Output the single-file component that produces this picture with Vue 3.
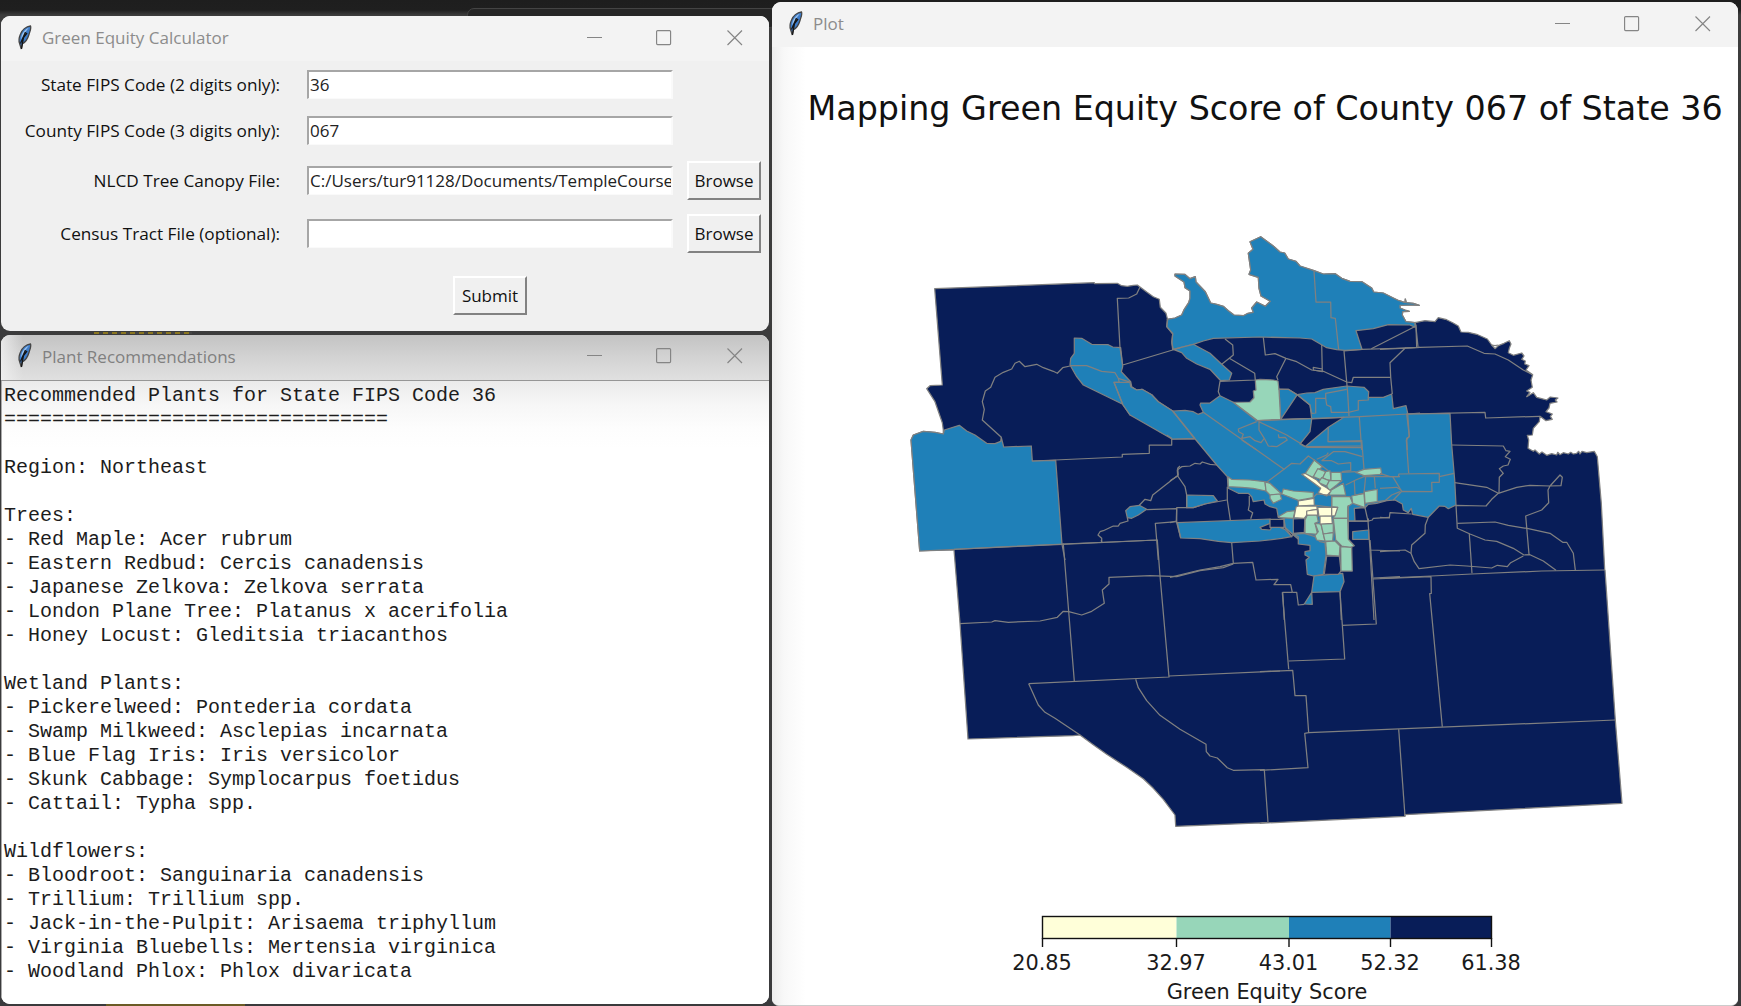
<script setup>
import { h } from 'vue'

const NAVY = '#081d58'
const BLUE = '#1f80b8'
const MINT = '#97d6b9'
const CREAM = '#ffffd9'

const plants = `Recommended Plants for State FIPS Code 36
================================

Region: Northeast

Trees:
- Red Maple: Acer rubrum
- Eastern Redbud: Cercis canadensis
- Japanese Zelkova: Zelkova serrata
- London Plane Tree: Platanus x acerifolia
- Honey Locust: Gleditsia triacanthos

Wetland Plants:
- Pickerelweed: Pontederia cordata
- Swamp Milkweed: Asclepias incarnata
- Blue Flag Iris: Iris versicolor
- Skunk Cabbage: Symplocarpus foetidus
- Cattail: Typha spp.

Wildflowers:
- Bloodroot: Sanguinaria canadensis
- Trillium: Trillium spp.
- Jack-in-the-Pulpit: Arisaema triphyllum
- Virginia Bluebells: Mertensia virginica
- Woodland Phlox: Phlox divaricata`

const fields = [
  { label: 'State FIPS Code (2 digits only):', value: '36' },
  { label: 'County FIPS Code (3 digits only):', value: '067' },
  { label: 'NLCD Tree Canopy File:', value: 'C:/Users/tur91128/Documents/TempleCourse', browse: true },
  { label: 'Census Tract File (optional):', value: '', browse: true },
]

// Map sheets: each has its own origin, points are stored in thirds of a pixel.
const sheets = { nw: [900, 220], n: [1160, 220], e: [1380, 280], c: [1170, 440], sw: [930, 540], se: [1260, 540] }
const at = (s, list) =>
  list.trim().split(/\s+/).map((p) => {
    const [x, y] = p.split(',').map(Number)
    return `${(sheets[s][0] + x / 3).toFixed(1)},${(sheets[s][1] + y / 3).toFixed(1)}`
  }).join(' ')

const lake = '22,298 45,294 65,285 73,268 86,248 90,235 90,213 75,203 72,186 45,168 45,162 74,163 90,176 106,170 108,186 136,215 152,249 170,253 190,259 205,272 222,285 250,287 264,280 280,277 275,264 290,246 316,259 331,244 303,228 297,205 295,172 267,163 272,150 265,100 279,88 270,65 302,50 340,78 360,96 374,99 385,117 408,124 420,138 462,152 490,162 526,161 545,175 570,184 606,185 635,204 641,216 670,219 700,234 717,242'
const inlet = '58,62 75,68 76,57 79,68 100,70 118,76 95,75 60,76 60,84 75,90 88,94 68,95 67,105 78,125 105,128'

const outline = [
  at('nw', '104,206 583,188 584,191 652,190 665,197 682,199 700,196 712,195 720,201 740,216 760,230 778,238 781,262 798,280 803,300'),
  at('n', lake),
  at('e', inlet),
  at('e', '135,122 165,125 175,113 200,119 218,128 235,138 243,156 265,157 290,163 322,177 335,195 345,206 355,197 372,190 388,182 393,192 388,205 385,218 400,226 425,219 432,228 425,238 436,243 434,252 447,257 438,270 458,284 453,300 457,322 440,333 450,337 440,350 460,338 470,352 485,356 500,360 511,351 534,354 526,360 531,366 510,370 507,384 498,395 517,402 511,409 517,418 498,422 480,409 478,425 460,445 457,465 442,466 446,480 444,505 460,514 465,510 478,522 486,516 500,526 515,521 530,525 533,517 540,524 550,518 565,522 572,517 580,522 590,520 596,514 600,522 606,514 620,518 643,514 652,530 664,670 674,870'),
  at('se', '1035,90 1066,540 1086,790 435,824 435,829 0,850'),
  at('sw', '1010,848 737,859 735,825 700,778 670,745 640,716 590,682 530,643 490,614 450,585 430,587 114,597 90,250 72,30'),
  at('nw', '59,993 33,660 40,645 70,634 105,637 130,642 130,630 127,608 105,545 80,506 90,497 127,495'),
].join(' ')

const west = at('nw', '33,660 40,645 70,634 105,637 130,642 133,630 178,616 200,633 225,645 260,670 285,671 302,664 304,652 311,681 394,678 397,723 467,721 486,973 59,993')
const north = [at('n', lake), at('e', inlet), at('n', '765,322 750,315 685,314 640,326 588,332 606,388 555,391 530,389 500,383 455,357 420,354 300,351 160,355 130,363 100,373 40,388 36,370 38,340 20,320')].join(' ')
const centre = [
  at('nw', '523,354 545,355 575,373 625,374 638,381 662,383 668,440 664,455 692,485 695,500 710,510 726,508 755,524 775,545 818,573'),
  at('n', '38,573 75,571 100,575 114,583 130,577 120,555 122,549 150,549 180,527 220,547 290,602 362,598 357,508 385,508 412,524 440,519 465,518 490,508 560,498 612,502 626,515 625,532 670,532 695,522 700,566 738,557 743,580'),
  at('e', '80,402 210,400 215,495 224,600 228,675 205,686 194,679 178,678 145,712 98,703 94,685 85,698 70,690 67,672 45,660 20,662'),
  at('c', '620,190 595,193 585,203 560,205 555,243 535,243 535,300 490,320 400,310 370,285 345,262 342,235 325,232 320,205 300,200 285,192 282,180 250,185 245,170 235,160 205,160 175,145 172,110 140,75 78,0'),
  at('n', '105,657 35,657 30,650 0,635'),
  at('nw', '770,607 740,600 690,585 668,553 550,495 530,470 510,435 512,415 523,400'),
].join(' ')

const areas = [
  [BLUE, west], [BLUE, north], [BLUE, centre],
  [BLUE, at('n', '40,388 65,398 80,415 110,432 150,448 182,482 208,480 215,460 185,433 150,400 100,373')],
  [BLUE, at('nw', '677,872 690,860 718,856 740,868 715,885 695,895 682,893')],
  // the corridor between the two long navy tracts
  [BLUE, at('nw', '642,487 690,487 692,500 710,510 726,508 755,524 775,545 818,573 885,655 816,657 690,585 668,553')],
  [MINT, at('n', '286,480 300,478 340,480 354,483 357,510 362,598 293,602 220,547 270,546 282,533 280,513 288,510')],
  [NAVY, at('n', '412,524 450,555 455,595 362,598')],
  [NAVY, at('n', '455,597 552,592 505,622 435,680 420,672 450,635')],
  // band south of the centre
  [BLUE, at('c', '22,248 300,237 300,250 270,262 275,268 300,270 305,262 330,262 345,268 365,290 335,295 270,303 185,308 145,304 90,296 32,294')],
  [NAVY, at('c', '300,238 342,238 342,262 320,262 300,262')],
  [BLUE, at('c', '50,165 130,167 142,183 105,192 70,203 50,203')],
  [NAVY, at('c', '553,205 585,203 594,243 555,243')],
  [BLUE, at('c', '548,275 596,270 596,298 548,298')],
  [BLUE, at('c', '370,283 403,280 435,290 450,305 465,308 468,346 460,403 430,408 412,403 408,360 418,352 405,345 405,335 420,332 420,316 385,312 385,290')],
  [BLUE, at('c', '432,408 518,400 522,425 510,455 425,457')],
  [BLUE, at('c', '403,492 425,457 427,493')],
  [NAVY, at('c', '370,237 405,235 403,277 370,280')],
  [NAVY, at('c', '470,348 508,348 513,393 505,403 463,402')],
  // inner ring
  [MINT, at('c', '174,110 185,118 240,120 285,125 288,153 250,145 215,142 175,140')],
  [MINT, at('c', '285,125 300,130 335,162 300,165 288,153')],
  [MINT, at('c', '300,165 330,162 335,178 310,190 300,175')],
  [MINT, at('c', '340,147 370,153 430,157 430,173 385,181 335,162')],
  [MINT, at('c', '433,60 457,80 440,95 430,112 405,102')],
  [MINT, at('c', '443,86 467,95 455,120 430,110')],
  [MINT, at('c', '467,95 480,92 483,120 470,120 458,113')],
  [MINT, at('c', '483,97 513,97 515,122 483,122')],
  [MINT, at('c', '455,113 478,122 470,138 445,128')],
  [MINT, at('c', '478,122 515,122 500,135 478,152 470,138')],
  [MINT, at('c', '480,152 520,130 527,165 478,165')],
  [MINT, at('c', '485,170 540,170 548,190 533,200 533,235 490,235 503,202 485,200')],
  [MINT, at('c', '545,168 582,160 585,203 548,190')],
  [MINT, at('c', '583,155 622,148 622,185 585,190')],
  [MINT, at('c', '557,97 582,88 632,84 635,103 582,107')],
  [MINT, at('c', '325,230 350,215 375,212 370,235 330,233')],
  [MINT, at('c', '405,240 412,225 440,222 445,245 435,250 443,283 405,280')],
  [MINT, at('c', '435,250 453,252 460,280 465,303 440,300 435,287 445,275')],
  [MINT, at('c', '453,252 490,250 490,278 460,282')],
  [MINT, at('c', '460,282 490,278 488,303 465,303')],
  [MINT, at('c', '490,235 533,235 535,298 553,317 540,323 515,318 497,300')],
  [MINT, at('c', '467,305 495,303 510,318 508,348 470,345')],
  [MINT, at('c', '512,320 545,322 547,393 513,393')],
  [CREAM, at('c', '395,103 405,100 440,120 455,135 470,143 483,153 470,168 445,158 452,145 430,128')],
  [CREAM, at('c', '385,183 432,175 433,195 385,198')],
  [CREAM, at('c', '378,201 385,198 440,198 442,208 420,212 410,225 403,235 372,233')],
  [CREAM, at('c', '410,213 442,208 443,225 410,225')],
  [CREAM, at('c', '443,202 485,202 485,228 447,230')],
  [CREAM, at('c', '485,202 503,202 495,227 485,228')],
  [CREAM, at('c', '450,228 485,228 487,250 450,252')],
]

const lines = [
  at('nw', '720,201 710,222 686,234 652,235 660,383 668,435 818,390 840,384'),
  at('nw', '803,300 800,320 818,342 815,365 818,390'),
  at('nw', '510,438 488,443 472,460 460,454 430,443 410,433 375,440 358,424 345,430 335,447 310,457 285,472 272,502 256,513 247,545 253,568 247,600 304,652'),
  at('nw', '510,437 560,437 605,454 645,458 655,475 692,487'),
  at('nw', '655,475 658,487 642,487 668,553'),
  at('nw', '397,723 667,711 667,703 748,700 748,675 815,675 815,655 800,645'),
  at('nw', '718,856 735,838 752,842 758,825 800,792 835,765 833,745 840,738'),
  at('nw', '740,869 830,866 830,905 766,910 770,960 486,973'),
  at('nw', '682,893 684,903 660,910 655,918 640,918 610,932 600,935 594,945 605,955 605,966'),
  at('n', '462,152 468,246 512,246 513,293 526,295 536,389'),
  at('n', '195,357 218,375 220,405 208,415 185,433'),
  at('n', '208,415 284,460 286,480 180,484 175,515 180,527'),
  at('n', '310,352 316,405 345,401 378,415 410,425 455,450 490,454 560,486 575,488 580,472 692,472'),
  at('n', '378,415 350,470 354,480'),
  at('n', '485,375 487,455 460,450 460,442 487,447'),
  at('n', '606,388 552,393 560,486 563,520 567,588'),
  at('n', '606,388 736,384 690,428 692,472 697,522'),
  at('n', '634,386 768,318 770,382 736,384'),
  at('n', '768,318 765,306'),
  at('n', '735,384 780,382'),
  at('n', '412,524 450,555 455,580 467,579 467,535 497,535 497,520 560,508'),
  at('n', '497,535 500,555 512,560 514,577 565,577 595,570 595,542 625,540 625,532'),
  at('n', '293,602 600,590 743,582 780,579'),
  at('n', '598,590 605,690'),
  at('n', '505,622 504,665 605,662'),
  at('n', '743,582 748,650 740,655 742,690'),
  at('n', '38,573 103,655'),
  at('n', '130,577 290,690'),
  at('n', '290,605 235,627 236,635 250,643 245,655 270,650 285,662 303,668 313,655 297,630 297,605 380,645 440,682 605,683'),
  at('n', '313,655 325,678 350,680 382,660 376,652 357,653 355,643'),
  at('n', '354,507 385,508 412,524'),
  at('e', '105,128 108,142 114,200'),
  at('e', '0,208 120,202 262,198 312,220 345,222 385,240 430,270 458,284'),
  at('e', '335,195 345,197 355,195'),
  at('e', '80,402 315,397 317,414 480,409'),
  at('e', '215,495 370,498 378,512 390,514 376,530 391,538 384,555 370,558 358,566 370,580 358,592 357,640'),
  at('e', '224,608 320,622 355,640 410,622 450,616 510,618 540,585 547,592 543,617 510,618 504,630 506,668 485,690 437,708 447,823'),
  at('e', '355,640 335,658 318,678 228,676 232,745 270,762 315,780 350,784 400,805 432,825 450,824 490,843 528,871'),
  at('e', '232,730 345,726 385,736 445,746 510,760 548,787 560,787 580,820 586,870'),
  at('e', '268,762 276,880'),
  at('e', '145,712 136,735 135,760 95,795 93,820 103,845 117,866 210,855 260,858 335,864 352,856 382,860 392,848 430,828'),
  at('e', '0,815 75,810 93,820'),
  at('e', '0,895 155,888 276,882 485,873 674,870'),
  at('e', '0,712 28,714 30,698 95,702'),
  at('e', '80,402 88,468 79,480 86,580'),
  at('e', '0,580 30,590 55,590 57,582 178,580 178,607 155,607 156,635 65,634 40,660'),
  at('e', '38,590 65,634'),
  at('e', '0,625 50,622 63,630'),
  at('e', '178,590 222,580'),
  at('c', '0,122 23,108 22,90 35,80 60,78 75,70 90,72 97,66 120,73 140,75'),
  at('c', '23,108 45,140 50,165'),
  at('c', '50,165 50,203 20,203 19,243 0,248'),
  at('c', '50,203 70,203 105,192 170,180'),
  at('c', '19,243 32,294'),
  at('c', '172,140 172,180 181,240'),
  at('c', '238,168 238,195 235,210 248,218 242,236'),
  at('c', '185,308 190,370 150,380 90,390 0,412'),
  at('c', '190,370 248,367 258,420 324,418 312,434 362,434 367,457 338,457 343,540'),
  at('c', '367,457 380,457 385,495 403,493'),
  at('c', '510,455 514,540'),
  at('c', '215,0 260,30 342,88 288,128'),
  at('c', '342,88 365,70 390,72 415,48 433,60 475,92'),
  at('c', '455,62 485,62 505,72 542,68 542,92 515,95'),
  at('c', '455,62 490,35 525,35 577,50'),
  at('c', '440,58 470,45 475,38'),
  at('c', '410,20 577,18'),
  at('c', '475,5 575,5'),
  at('c', '575,0 582,88'),
  at('c', '515,97 557,95'),
  at('c', '527,135 557,120 582,110 690,110'),
  at('c', '553,122 555,165 582,160 587,108'),
  at('c', '613,108 616,145'),
  at('c', '430,173 440,162 478,165'),
  at('c', '433,195 485,202 485,168'),
  at('c', '342,235 345,262 365,290 370,280'),
  at('c', '535,195 535,243 596,243 594,235'),
  at('c', '594,243 600,330 690,333'),
  at('c', '600,330 612,540'),
  at('c', '610,414 690,410'),
  at('c', '622,185 645,182 665,165 690,155'),
  at('c', '596,243 607,240 610,235 658,232'),
  at('sw', '398,12 682,0 690,107 717,411 296,431'),
  at('sw', '72,28 400,12 416,215 433,423'),
  at('sw', '515,8 514,0'),
  at('nw', '770,960 775,1020'),
  at('nw', '486,973 495,1020'),
  at('sw', '90,251 185,246 195,242 235,247 330,243 382,232 400,214 416,215 455,225 485,214 523,190 517,150 537,132 537,112 660,107 740,110 810,92 880,83 910,72'),
  at('sw', '296,431 325,495 345,517 375,535 450,585'),
  at('sw', '617,418 625,443 650,482 690,526 750,568 828,613 829,635 840,648 862,654 892,683 910,691 1003,689 1014,847'),
  at('sw', '717,408 1050,393'),
  at('se', '0,395 98,391 105,467 138,467 146,578 134,580 144,683 0,691'),
  at('se', '67,157 86,388'),
  at('se', '86,363 254,357 240,155'),
  at('se', '246,256 349,252 330,0'),
  at('se', '339,117 513,110 514,160 509,161 547,560'),
  at('se', '146,578 1066,540'),
  at('se', '416,568 435,829'),
]

const bins = [
  { color: CREAM, w: 134 },
  { color: MINT, w: 112.5 },
  { color: BLUE, w: 101.5 },
  { color: NAVY, w: 101 },
]
const ticks = [
  { x: 1042.5, t: '20.85' }, { x: 1176.5, t: '32.97' }, { x: 1289, t: '43.01' }, { x: 1390.5, t: '52.32' }, { x: 1491.5, t: '61.38' },
]

const Feather = () =>
  h('svg', { width: 16, height: 26, viewBox: '0 0 16 26' }, [
    h('path', { d: 'M13.5 1C9 1.500 5 5 3.500 9C2 12.500 1.600 16 2.600 18.500L4.300 24L5.200 19C9 17 11 13 12 9.500C13 6 14.500 3 13.500 1Z', fill: '#3d7cc9', stroke: '#454545', 'stroke-width': 1.3 }),
    h('path', { d: 'M12 2.500C8.500 4 5.500 7.500 4.600 11L4 14.500C6.500 11 8 7 12 2.500Z', fill: '#9cc4ee' }),
    h('path', { d: 'M10 8L6.500 12.500L4.500 24M8.500 7L3.500 18.500', fill: 'none', stroke: '#151515', 'stroke-width': 1.3 }),
  ])
const Controls = () =>
  h('svg', { width: 156, height: 16, viewBox: '0 0 156 16', fill: 'none', stroke: '#858585', 'stroke-width': 1.15 }, [
    h('path', { d: 'M0 7.500H15' }),
    h('rect', { x: 69.6, y: 0.6, width: 14, height: 14, rx: 1 }),
    h('path', { d: 'M140.500 .5L155 15M155 .5L140.500 15' }),
  ])
</script>

<template>
  <main class="desktop">
    <i class="behind-tab"></i>
    <i class="squiggle"></i>
    <i class="strip"></i>
    <section class="window form-window">
      <header class="bar">
        <Feather class="feather" /><span class="caption">Green Equity Calculator</span><Controls class="controls" />
      </header>
      <form class="form" @submit.prevent>
        <template v-for="f in fields" :key="f.label">
          <label class="label">{{ f.label }}</label>
          <div class="entry">{{ f.value }}</div>
          <button v-if="f.browse" type="button" class="btn">Browse</button>
          <span v-else></span>
        </template>
        <span></span>
        <button type="button" class="btn submit">Submit</button>
      </form>
    </section>

    <section class="window list-window">
      <header class="bar">
        <Feather class="feather" /><span class="caption">Plant Recommendations</span><Controls class="controls" />
      </header>
      <pre class="text">{{ plants }}</pre>
    </section>

    <section class="window plot-window">
      <header class="bar">
        <Feather class="feather" /><span class="caption">Plot</span><Controls class="controls" />
      </header>
      <div class="canvas">
        <svg width="966" height="959" viewBox="772 47 966 959">
          <text class="title" x="807.500" y="119.500">Mapping Green Equity Score of County 067 of State 36</text>
          <polygon :points="outline" :fill="NAVY" class="edge" />
          <polygon v-for="(a, i) in areas" :key="'a' + i" :points="a[1]" :fill="a[0]" class="edge" />
          <polyline v-for="(l, i) in lines" :key="'l' + i" :points="l" fill="none" class="edge" />
          <rect v-for="(b, i) in bins" :key="b.color" :x="ticks[i].x" y="916.500" :width="b.w" height="22" :fill="b.color" />
          <rect x="1042.500" y="916.500" width="449" height="22" fill="none" stroke="#111" stroke-width="1.4" />
          <g v-for="t in ticks" :key="t.t">
            <path :d="`M${t.x} 938V947`" stroke="#111" stroke-width="1.4" />
            <text class="tick" :x="t.x - 0.5" y="971" text-anchor="middle" dy="-1">{{ t.t }}</text>
          </g>
          <text class="tick" x="1267" y="999" text-anchor="middle">Green Equity Score</text>
        </svg>
      </div>
    </section>
  </main>
</template>

<style>
html, body { margin: 0; overflow: hidden; background: #1f1f1f; }
</style>

<style scoped>
.desktop {
  position: relative;
  width: 1741px;
  height: 1006px;
  overflow: hidden;
  background: linear-gradient(#1e1e1e 0, #1f1f1f 10px, #3c3c3c 15px, #3a3a3c 100%);
  font-family: "Open Sans", "Noto Sans", sans-serif;
}
.behind-tab { position: absolute; left: 467px; top: 8px; width: 310px; height: 20px; border: 1px solid #444; border-radius: 7px; background: #262626; box-sizing: border-box; }
.squiggle { position: absolute; left: 94px; top: 332px; width: 98px; height: 2px; background: repeating-linear-gradient(90deg, #8a7620 0 5px, #444 5px 9px); }
.strip { position: absolute; left: 106px; top: 1004px; width: 139px; height: 2px; background: #6b5b25; }
.window { position: absolute; display: flex; flex-direction: column; border-radius: 9px; overflow: hidden; box-sizing: border-box; }
.form-window { left: 1px; top: 16px; width: 768px; height: 315px; background: #f0f0f0; }
.list-window { left: 1px; top: 335px; width: 768px; height: 669px; background: #fff; }
.plot-window { left: 772px; top: 2px; width: 966px; height: 1004px; background: #fff; border-radius: 9px 9px 7px 7px; border-bottom: 1px solid #ccc; }
.bar { flex: none; height: 45px; box-sizing: border-box; display: flex; align-items: center; padding: 0 26px 2px 16px; background: #f3f3f3; }
.list-window .bar { height: 46px; padding-bottom: 3px; background: linear-gradient(90deg, rgba(243, 243, 243, .75), transparent 22px), linear-gradient(#c3c3c3, #d3d3d3 50%, #e0e0e0); border-bottom: 1px solid #969696; }
.feather { flex: none; }
.caption { flex: 1; margin-left: 9px; font-size: 17px; color: #8c8c8c; white-space: nowrap; }
.list-window .caption { color: #808080; }
.plot-window .bar { padding-right: 27px; }
.controls { flex: none; }
.form { flex: 1; display: grid; grid-template-columns: 279px 393px 88px; grid-template-rows: 46px 46.5px 53px 54.500px 69px; align-items: center; }
.label { justify-self: end; font-size: 17.2px; color: #111; white-space: nowrap; }
.entry { margin-left: 27px; height: 29px; box-sizing: border-box; border: 2px solid #fff; border-top-color: #a6a6a6; border-left-color: #a6a6a6; border-bottom: 1px solid #fafafa; border-right-color: #fafafa; background: #fff; font-size: 17px; line-height: 25px; color: #222; padding-left: 1px; overflow: hidden; white-space: nowrap; }
.btn { justify-self: end; width: 74px; height: 39px; box-sizing: border-box; padding: 0; border: 2px solid; border-color: #fff #828282 #828282 #fff; background: #f0f0f0; font-family: inherit; font-size: 17px; color: #111; }
.submit { justify-self: start; margin-left: 173px; }
.entry { margin-right: 0; }
.text { margin: 0; flex: 1; padding: 3px 0 0 2px; border-left: 1px solid #aaa; font-family: "Liberation Mono", "Courier New", monospace; font-size: 20px; line-height: 24px; color: #1c1c1c; background: linear-gradient(#ebebeb, #f7f7f7 25px, #fdfdfd 48px, #fff 68px); }
.canvas { flex: 1; background: linear-gradient(90deg, #ededed, #f8f8f8 12px, #fff 34px); }
.canvas svg { display: block; }
.title { font-family: "DejaVu Sans", sans-serif; font-size: 33.350px; fill: #111; }
.tick { font-family: "DejaVu Sans", sans-serif; font-size: 20.850px; fill: #1a1a1a; }
.edge { stroke: #808080; stroke-width: 1.25; stroke-linejoin: round; }
</style>
